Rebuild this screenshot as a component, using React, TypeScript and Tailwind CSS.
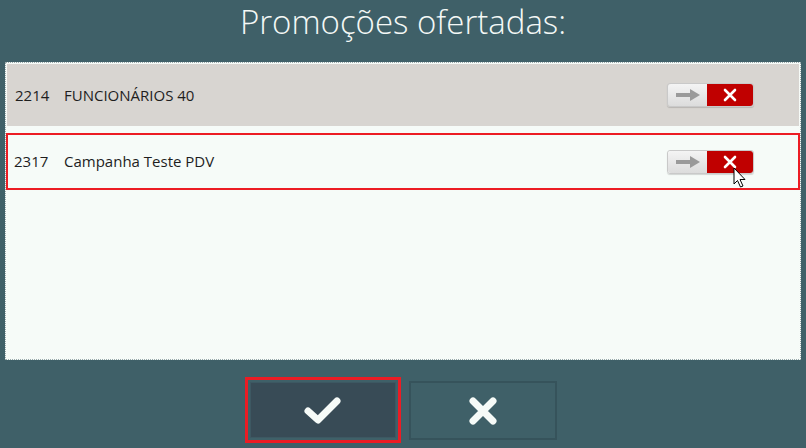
import React from 'react';

const promos = [
  { code: '2214', name: 'FUNCIONÁRIOS 40', selected: false },
  { code: '2317', name: 'Campanha Teste PDV', selected: true },
];

const Toggle: React.FC<{ cursor?: boolean }> = ({ cursor }) => (
  <div className="relative flex h-[24px] w-[87px] rounded-[3px] border border-[#c9c9c9] shadow-[0_1px_1px_rgba(0,0,0,0.15)]">
    <div className="flex w-[39px] items-center justify-center rounded-l-[3px] bg-gradient-to-b from-[#f4f4f4] to-[#dcdcdc]">
      <svg width="26" height="12" viewBox="0 0 26 12">
        <rect x="1" y="4" width="16" height="4" fill="#9a9a9a" />
        <polygon points="15,0 25,6 15,12" fill="#9a9a9a" />
      </svg>
    </div>
    <div className="flex flex-1 items-center justify-center rounded-r-[3px] bg-[#c00000]">
      <svg width="14" height="14" viewBox="0 0 14 14">
        <path d="M2 2 L12 12 M12 2 L2 12" stroke="#ffffff" strokeWidth="2.6" strokeLinecap="round" />
      </svg>
    </div>
    {cursor && (
      <svg className="absolute left-[65px] top-[16px]" width="14" height="22" viewBox="0 0 14 22">
        <path d="M1 1 L1 17 L4.5 13.5 L7.5 20 L10 19 L7 12.5 L12 12.5 Z" fill="#ffffff" stroke="#000000" strokeWidth="1" strokeLinejoin="round" />
      </svg>
    )}
  </div>
);

export default function App() {
  return (
    <div className="flex h-[448px] w-[806px] flex-col bg-[#3f6068] font-['Open_Sans',sans-serif]">
      <h1 className="flex h-[62px] items-start justify-center text-[33px] font-light leading-[44px] text-[#f4f8f6]">
        Promoções ofertadas:
      </h1>
      <div className="mx-[5px] h-[298px] border border-dotted border-[#9aaaac] bg-[#f6fbf8] p-[1px]">
        {promos.map((p) =>
          p.selected ? (
            <div key={p.code} className="mx-[-1px] mt-[7px] flex h-[57px] items-center border-2 border-[#ec1c24] pl-[6px] pr-[44px] text-[15px] text-[#1e1e1e]">
              <span className="w-[50px]">{p.code}</span>
              <span className="flex-1">{p.name}</span>
              <Toggle cursor />
            </div>
          ) : (
            <div key={p.code} className="flex h-[62px] items-center bg-[#d8d5d1] pl-[8px] pr-[45px] text-[15px] text-[#1e1e1e]">
              <span className="w-[49px]">{p.code}</span>
              <span className="flex-1">{p.name}</span>
              <Toggle />
            </div>
          )
        )}
      </div>
      <div className="mt-[17px] flex justify-center gap-[8px] pr-[4px]">
        <button className="h-[66px] w-[156px] border-[3px] border-[#ec1c24] p-[2px]">
          <div className="flex h-full w-full items-center justify-center border border-[#3d5862] bg-[#384b56]">
            <svg width="40" height="30" viewBox="0 0 40 30">
              <path d="M5 16 L15 25 L34 6" fill="none" stroke="#f6fbf8" strokeWidth="7" strokeLinecap="round" strokeLinejoin="round" />
            </svg>
          </div>
        </button>
        <button className="mt-[4px] flex h-[59px] w-[148px] items-center justify-center border-2 border-[#36535b] bg-[#3f6068]">
          <svg width="32" height="32" viewBox="0 0 32 32">
            <path d="M6 6 L26 26 M26 6 L6 26" stroke="#f6fbf8" strokeWidth="7" strokeLinecap="round" />
          </svg>
        </button>
      </div>
    </div>
  );
}
